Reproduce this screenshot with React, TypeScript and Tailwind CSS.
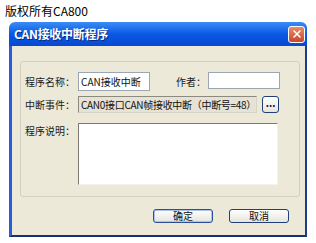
import { X } from "lucide-react";

const font = "font-['SimSun','Noto_Sans_CJK_SC',sans-serif]";
const label = "w-[53px] shrink-0 text-[10px] leading-[12px] text-[#1b1b1b]";
const xpButton =
  "flex items-center justify-center rounded-[3px] border border-[#1f3f7a] bg-gradient-to-b from-white to-[#e6e4dc] text-[10px] leading-[10px] text-[#111]";

export default function App() {
  return (
    <div className={`${font} h-[243px] w-[316px] overflow-hidden bg-white`}>
      <p className="pl-[5px] pt-[3px] text-[12px] leading-[15px] text-black">
        版权所有CA800
      </p>

      <div className="ml-[9px] mt-[4px] w-[298px]">
        {/* title bar */}
        <div className="flex h-[24px] items-center justify-between rounded-t-[6px] bg-gradient-to-b from-[#3b8cf5] via-[#0a58e4] to-[#0848d2] pl-[5px] pr-[2px]">
          <span className="text-[12px] font-bold leading-[14px] tracking-[-0.3px] text-white [text-shadow:1px_1px_0_#0a2a80]">
            CAN接收中断程序
          </span>
          <div className="flex h-[17px] w-[17px] items-center justify-center rounded-[3px] border border-white bg-gradient-to-b from-[#e88a6a] to-[#c9452a]">
            <X size={12} strokeWidth={3} className="text-white" />
          </div>
        </div>

        {/* body */}
        <div className="h-[191px] border-b-[2px] border-l-[3px] border-r-[2px] border-b-[#16307c] border-l-[#2a5bd8] border-r-[#1d3d8c] bg-[#ece9d8] pl-[8px] pt-[15px]">
          <div className="h-[136px] w-[280px] rounded-[3px] border border-[#d3d0c0] pl-[4px] pt-[10px]">
            <div className="flex items-center">
              <span className={label}>程序名称：</span>
              <div className="flex h-[19px] w-[72px] items-center border border-[#9aa6b4] bg-white pl-[2px] text-[10px] leading-[12px] text-[#111]">
                CAN接收中断
              </div>
              <span className="ml-[26px] w-[32px] text-[10px] leading-[12px] text-[#1b1b1b]">
                作者：
              </span>
              <div className="h-[17px] w-[72px] self-start border border-[#9aa6b4] bg-white" />
            </div>

            <div className="mt-[5px] flex items-center">
              <span className={label}>中断事件：</span>
              <div className="flex h-[17px] w-[179px] items-center overflow-hidden whitespace-nowrap border border-[#8c8a80] border-b-[#d8d5c8] border-r-[#d8d5c8] bg-[#e6e3d6] pl-[2px] text-[10px] leading-[12px] tracking-[-0.3px] text-[#111]">
                CAN0接口CAN帧接收中断（中断号=48）
              </div>
              <button className={`${xpButton} ml-[5px] h-[17px] w-[17px] pb-[3px] font-bold`}>
                ...
              </button>
            </div>

            <div className="mt-[10px] flex items-start">
              <span className={`${label} pt-[2px]`}>程序说明：</span>
              <div className="h-[62px] w-[200px] border border-[#7c7a72] border-b-[#f4f2ea] border-r-[#f4f2ea] bg-white" />
            </div>
          </div>

          <div className="ml-[133px] mt-[12px] flex gap-[16px]">
            <button className={`${xpButton} h-[14px] w-[60px] border-[#2b4f9a] shadow-[inset_0_0_0_1px_#a9c4f0]`}>
              确定
            </button>
            <button className={`${xpButton} h-[14px] w-[60px]`}>取消</button>
          </div>
        </div>
      </div>
    </div>
  );
}
